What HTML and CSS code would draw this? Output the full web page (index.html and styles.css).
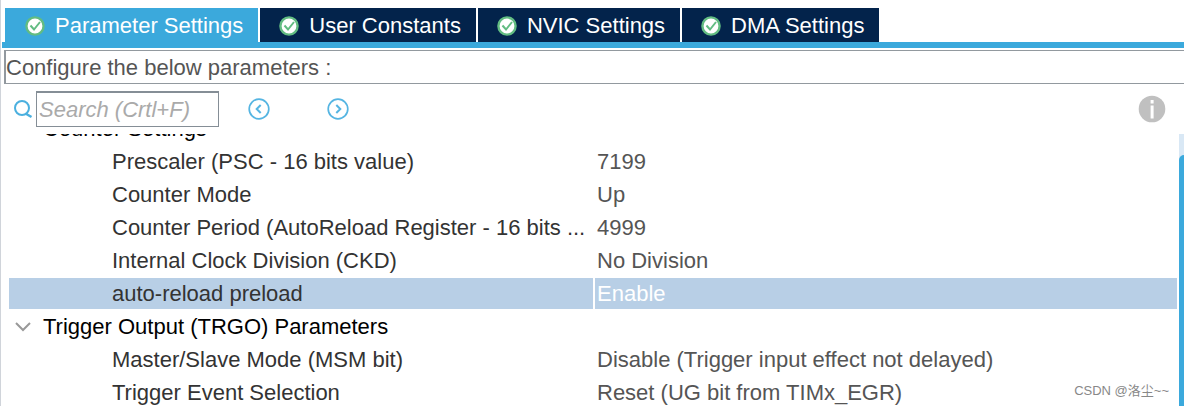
FILE: index.html
```
<!DOCTYPE html>
<html lang="en">
<head>
	<meta charset="utf-8">
	<title>Parameter Settings</title>
	<link rel="stylesheet" href="styles.css">
</head>
<body>
<svg class="defs" width="0" height="0">
	<symbol id="check" viewBox="0 0 20 20">
		<circle cx="10" cy="10" r="8.6" fill="#fff" stroke="#62bc82" stroke-width="2.4"/>
		<path d="M5.5 9.5l3.5 4 6-7.5" fill="none" stroke="#62bc82" stroke-width="2"/>
	</symbol>
</svg>
<nav class="tabs">
	<button class="tab active"><svg class="check"><use href="#check"/></svg>Parameter Settings</button>
	<button class="tab"><svg class="check"><use href="#check"/></svg>User Constants</button>
	<button class="tab"><svg class="check"><use href="#check"/></svg>NVIC Settings</button>
	<button class="tab"><svg class="check"><use href="#check"/></svg>DMA Settings</button>
</nav>
<div class="message">Configure the below parameters :</div>
<div class="toolbar">
	<label class="searchIcon" for="search">
		<svg width="20" height="20" viewBox="0 0 20 20" fill="none" stroke="#4bb0df" stroke-width="2">
			<circle cx="9" cy="9" r="7"/>
			<path d="M12.5 14.5l6 3.5" stroke-width="2.5"/>
		</svg>
	</label>
	<input class="search" id="search" type="text" placeholder="Search (Crtl+F)">
	<button class="iconBtn prev" aria-label="Previous">
		<svg width="22" height="22" viewBox="0 0 22 22" fill="none" stroke="#55b5e2">
			<circle cx="11" cy="11" r="9.8" stroke-width="1.7"/>
			<path d="M12.7 7l-4 4 4 4" stroke-width="2"/>
		</svg>
	</button>
	<button class="iconBtn next" aria-label="Next">
		<svg width="22" height="22" viewBox="0 0 22 22" fill="none" stroke="#55b5e2">
			<circle cx="11" cy="11" r="9.8" stroke-width="1.7"/>
			<path d="M9.3 7l4 4-4 4" stroke-width="2"/>
		</svg>
	</button>
	<button class="iconBtn info" aria-label="Information">
		<svg width="28" height="28" viewBox="0 0 28 28">
			<circle cx="14" cy="14" r="13.3" fill="#c0c0c0"/>
			<path d="M12.6 5h3v3.4h-3zM12.6 10.4h3v13h-3z" fill="#fff"/>
		</svg>
	</button>
</div>
<div class="tree">
	<div class="rows">
		<table class="params">
			<tr class="group"><th colspan="2">Counter Settings</th></tr>
			<tr><td>Prescaler (PSC - 16 bits value)</td><td>7199</td></tr>
			<tr><td>Counter Mode</td><td>Up</td></tr>
			<tr><td>Counter Period (AutoReload Register - 16 bits ...</td><td>4999</td></tr>
			<tr><td>Internal Clock Division (CKD)</td><td>No Division</td></tr>
			<tr class="selected"><td>auto-reload preload</td><td>Enable</td></tr>
			<tr class="group"><th colspan="2"><svg class="arrow" viewBox="0 0 16 10"><path d="M1 1l7 7 7-7" fill="none" stroke="#999" stroke-width="2"/></svg>Trigger Output (TRGO) Parameters</th></tr>
			<tr><td>Master/Slave Mode (MSM bit)</td><td>Disable (Trigger input effect not delayed)</td></tr>
			<tr><td>Trigger Event Selection</td><td>Reset (UG bit from TIMx_EGR)</td></tr>
		</table>
	</div>
	<div class="scrollbar"><div class="thumb"></div></div>
</div>
<div class="watermark">CSDN @洛尘~~</div>
</body>
</html>
```
FILE: styles.css
```
* { box-sizing: border-box; }
body {
	display: flex;
	flex-direction: column;
	height: 100vh;
	margin: 0;
	padding-top: 8px;
	border-left: 1px solid #d0d4da;
	background-color: #fff;
	color: #555;
	font-family: "Liberation Sans", Arial, sans-serif;
	font-size: 22px;
	overflow: hidden;
}
button, input {
	font: inherit;
	border-radius: 0;
}
.defs { display: none; }

.tabs {
	display: flex;
	gap: 2px;
	margin-left: 1px;
	padding-left: 3px;
	border-bottom: 6px solid #3ba9dc;
}
.tab {
	display: flex;
	align-items: center;
	gap: 10px;
	height: 34px;
	padding: 1px 15px 0 19px;
	border: 0;
	background-color: #03234b;
	color: #fff;
	white-space: nowrap;
}
.tab.active {
	padding-left: 20px;
	background-color: #3ba9dc;
}
.check {
	width: 20px;
	height: 20px;
}

.message {
	margin: 2px 0 0 3px;
	padding-top: 1px;
	border: 1px solid #92999f;
	border-left-width: 2px;
	border-right: 0;
	line-height: 31px;
}

.toolbar {
	display: flex;
	align-items: center;
	padding: 7px 18px 7px 12px;
}
.searchIcon {
	display: flex;
	margin-right: 3px;
}
.search {
	width: 183px;
	height: 36px;
	padding: 0 2px;
	border: 1px solid #858e96;
	border-top-width: 2px;
	color: #555;
}
.search::placeholder {
	color: #aaa;
	font-style: italic;
	opacity: 1;
}
.iconBtn {
	display: flex;
	padding: 0;
	border: 0;
	background: none;
}
.prev { margin-left: 29px; }
.next { margin-left: 57px; }
.info { margin-left: auto; }

.tree {
	display: flex;
	flex: 1;
	min-height: 0;
}
.rows {
	flex: 1;
	min-width: 0;
	padding: 0 2px 0 8px;
	overflow: hidden;
}
.params {
	width: 100%;
	margin-top: -21px; /* scrolled down a little */
	border-spacing: 0;
	table-layout: fixed;
}
.params th, .params td {
	height: 33px;
	padding: 0 2px;
	border-bottom: 2px solid #fff;
	line-height: 31px;
	text-align: left;
	font-weight: normal;
	white-space: nowrap;
	overflow: hidden;
	text-overflow: ellipsis;
}
.params td:first-child {
	padding-left: 103px;
	color: #333;
}
.params td:last-child { border-left: 2px solid #fff; }
.params .group th {
	padding-left: 34px;
	color: #000;
}
.arrow {
	width: 16px;
	height: 10px;
	margin: 0 12px 2px -28px;
}
.params .selected td { background-color: #b8cfe6; background-clip: padding-box; }
.params .selected td:last-child { color: #fff; }

.scrollbar {
	width: 5px;
	padding-top: 21px;
	background-color: #d9e8f5;
}
.thumb {
	height: 100%;
	border-radius: 5px 0 0 0;
	background-color: #3ba9dc;
}

/* lies over the tree */
.watermark {
	position: absolute;
	right: 15px;
	bottom: 7px;
	color: #888;
	font-family: "Liberation Sans", "Noto Sans CJK SC", sans-serif;
	font-size: 13px;
}
```
